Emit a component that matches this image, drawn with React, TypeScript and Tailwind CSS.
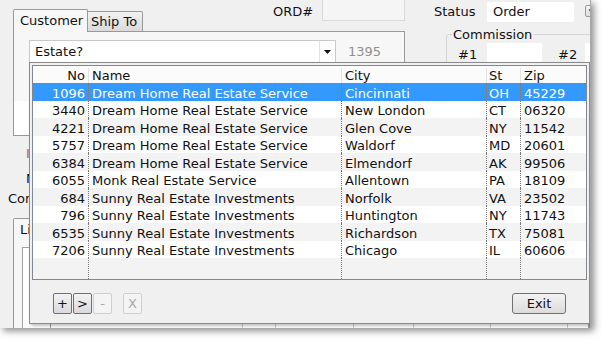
import React from "react";

const rows = [
  { no: "1096", name: "Dream Home Real Estate Service", city: "Cincinnati", st: "OH", zip: "45229" },
  { no: "3440", name: "Dream Home Real Estate Service", city: "New London", st: "CT", zip: "06320" },
  { no: "4221", name: "Dream Home Real Estate Service", city: "Glen Cove", st: "NY", zip: "11542" },
  { no: "5757", name: "Dream Home Real Estate Service", city: "Waldorf", st: "MD", zip: "20601" },
  { no: "6384", name: "Dream Home Real Estate Service", city: "Elmendorf", st: "AK", zip: "99506" },
  { no: "6055", name: "Monk Real Estate Service", city: "Allentown", st: "PA", zip: "18109" },
  { no: "684", name: "Sunny Real Estate Investments", city: "Norfolk", st: "VA", zip: "23502" },
  { no: "796", name: "Sunny Real Estate Investments", city: "Huntington", st: "NY", zip: "11743" },
  { no: "6535", name: "Sunny Real Estate Investments", city: "Richardson", st: "TX", zip: "75081" },
  { no: "7206", name: "Sunny Real Estate Investments", city: "Chicago", st: "IL", zip: "60606" },
];

function SmallButton({ label, disabled = false }: { label: string; disabled?: boolean }) {
  return (
    <button
      type="button"
      className={
        disabled
          ? "flex h-[21px] w-[19px] shrink-0 items-center justify-center rounded-[2px] border border-[#cfcfcf] bg-[#f4f4f4] text-[13px] leading-none text-[#a8a8a8]"
          : "flex h-[21px] w-[19px] shrink-0 items-center justify-center rounded-[2px] border border-[#707070] bg-gradient-to-b from-[#f3f3f3] to-[#dadada] text-[13px] leading-none text-[#111]"
      }
    >
      {label}
    </button>
  );
}

function PickList() {
  return (
    <div className="absolute left-[29px] top-[62px] z-20 flex h-[262px] w-[561px] flex-col border border-[#8b8b8b] bg-[#f0f0f0] p-[2px] shadow-[2px_2px_3px_rgba(0,0,0,0.25)]">
      <div className="flex h-[215px] flex-col border border-[#828790] bg-white">
        <div className="flex h-[17px] shrink-0 bg-[#fbfbfb] pt-[2px]">
          <div className="flex w-[56px] shrink-0 items-center justify-end border-r border-[#e3e3e3] pr-[3px]">No</div>
          <div className="flex w-[253px] shrink-0 items-center border-r border-[#e3e3e3] pl-[3px]">Name</div>
          <div className="flex w-[145px] shrink-0 items-center border-r border-[#e3e3e3] pl-[3px]">City</div>
          <div className="flex w-[34px] shrink-0 items-center border-r border-[#e3e3e3] pl-[2px]">St</div>
          <div className="flex flex-1 items-center pl-[3px]">Zip</div>
        </div>
        {rows.map((row, index) => {
          const selected = index === 0;
          const rowClass = selected
            ? "flex h-[17.5px] shrink-0 bg-[#3399ff] text-white"
            : index % 2 === 0
            ? "flex h-[17.5px] shrink-0 bg-[#f3f3f3]"
            : "flex h-[17.5px] shrink-0 bg-white";
          return (
            <div key={row.no} className={rowClass}>
              <div className="flex w-[56px] shrink-0 items-center justify-end border-r border-dotted border-[#7a7a7a] pr-[3px] pt-[3px]">{row.no}</div>
              <div className="flex w-[253px] shrink-0 items-center border-r border-dotted border-[#7a7a7a] pl-[3px] pt-[3px]">{row.name}</div>
              <div className="flex w-[145px] shrink-0 items-center border-r border-dotted border-[#7a7a7a] pl-[3px] pt-[3px]">{row.city}</div>
              <div className="flex w-[34px] shrink-0 items-center border-r border-dotted border-[#7a7a7a] pl-[2px] pt-[3px]">{row.st}</div>
              <div className="flex flex-1 items-center pl-[3px] pt-[3px]">{row.zip}</div>
            </div>
          );
        })}
        <div className="flex flex-1 bg-[#f3f3f3]">
          <div className="w-[56px] shrink-0 border-r border-dotted border-[#7a7a7a]" />
          <div className="w-[253px] shrink-0 border-r border-dotted border-[#7a7a7a]" />
          <div className="w-[145px] shrink-0 border-r border-dotted border-[#7a7a7a]" />
          <div className="w-[34px] shrink-0 border-r border-dotted border-[#7a7a7a]" />
          <div className="flex-1" />
        </div>
      </div>
      <div className="flex flex-1 items-start pt-[13px]">
        <div className="ml-[21px] flex shrink-0 gap-px">
          <SmallButton label="+" />
          <SmallButton label=">" />
          <SmallButton label="-" disabled />
        </div>
        <div className="ml-[11px] shrink-0">
          <SmallButton label="X" disabled />
        </div>
        <button
          type="button"
          className="ml-auto mr-[21px] flex h-[21px] w-[54px] shrink-0 items-center justify-center rounded-[3px] border border-[#707070] bg-gradient-to-b from-[#f3f3f3] to-[#dcdcdc] text-[13px] leading-none text-[#111]"
        >
          Exit
        </button>
      </div>
    </div>
  );
}

export default function App() {
  return (
    <div className="h-[339px] w-[603px] overflow-hidden bg-white font-['DejaVu_Sans',sans-serif] text-[13px] text-[#111]">
      <div className="relative h-[328px] w-[591px] overflow-hidden border-r border-[#a8a8a8] bg-[#f0f0f0] shadow-[3px_3px_7px_rgba(0,0,0,0.45)]">
        {/* header strip: tabs, order number, status */}
        <div className="flex h-[31px] items-start">
          <div className="ml-[13px] flex shrink-0 items-start">
            <div className="relative z-10 mt-[9px] h-[23px] w-[75px] shrink-0 rounded-t-[2px] border border-b-0 border-[#999] bg-[#f7f7f7] pl-[6px] leading-[21px]">
              Customer
            </div>
            <div className="mt-[11px] h-[20px] w-[55px] shrink-0 rounded-tr-[2px] border-r border-t border-[#999] bg-gradient-to-b from-[#f2f2f2] to-[#dadada] pl-[3px] leading-[19px]">
              Ship To
            </div>
          </div>
          <div className="ml-[130px] mt-[2px] w-[49px] shrink-0 leading-[20px]">ORD#</div>
          <div className="-mt-px h-[22px] w-[83px] shrink-0 border border-[#dadada] bg-[#f5f5f5]" />
          <div className="ml-[29px] mt-[2px] w-[53px] shrink-0 leading-[20px]">Status</div>
          <div className="mt-[2px] h-[20px] w-[87px] shrink-0 bg-white pl-[6px] leading-[20px]">Order</div>
          <div className="ml-[11px] mt-[5px] flex h-[12px] w-[14px] shrink-0 items-center justify-center rounded-[2px] border border-[#9a9a9a] bg-gradient-to-b from-[#f6f6f6] to-[#dedede]">
            <svg width="8" height="6" viewBox="0 0 8 6" fill="none" stroke="#3b5998" strokeWidth="1.3">
              <path d="M1 1.5 4 4.5 7 1.5" />
            </svg>
          </div>
        </div>

        {/* customer panel and commission group */}
        <div className="flex h-[105px] items-start">
          <div className="ml-[13px] flex h-[105px] w-[392px] shrink-0 flex-col border border-[#999] bg-[#f7f7f7]">
            <div className="ml-[15px] mt-[8px] flex items-center">
              <div className="flex h-[23px] w-[307px] shrink-0 border border-[#c9c9c9] bg-white">
                <div className="flex flex-1 items-center pl-[5px]">Estate?</div>
                <div className="flex w-[16px] items-center justify-center border-l border-[#e2e2e2]">
                  <svg width="7" height="4" viewBox="0 0 7 4">
                    <path d="M0 0h7L3.5 4z" fill="#111" />
                  </svg>
                </div>
              </div>
              <div className="ml-[12px] shrink-0 text-[#8f8f8f]">1395</div>
            </div>
            <div className="mt-auto h-[34px] w-[40px] bg-white" />
          </div>
          <div className="relative ml-[41px] mt-[3px] flex h-[60px] w-[160px] shrink-0 items-start rounded-[3px] border border-[#d5d5d5] pl-[11px] pt-[8px]">
            <div className="absolute -top-[9px] left-[5px] bg-[#f0f0f0] px-px leading-[17px]">Commission</div>
            <div className="mt-[2px] w-[29px] shrink-0 leading-[20px]">#1</div>
            <div className="h-[20px] w-[55px] shrink-0 bg-white" />
            <div className="ml-[16px] mt-[2px] w-[27px] shrink-0 leading-[20px]">#2</div>
            <div className="h-[20px] w-[40px] shrink-0 bg-white" />
          </div>
        </div>

        {/* what shows of the labels beside the pick list */}
        <div className="flex flex-col whitespace-nowrap leading-[18px]">
          <div className="ml-[26px] mt-[9px] text-[#b06a28]">I</div>
          <div className="ml-[26px] mt-[7px]">N</div>
          <div className="ml-[8px] mt-[2px]">Con</div>
        </div>

        {/* line items tab */}
        <div className="ml-[13px] mt-[10px] flex">
          <div className="relative z-10 h-[23px] w-[80px] shrink-0 rounded-t-[2px] border border-b-0 border-[#999] bg-[#f7f7f7] pl-[6px] leading-[21px]">
            Li
          </div>
        </div>
        <div className="-mt-px ml-[13px] h-[100px] border border-[#999] bg-[#f7f7f7] pl-[8px] pt-[6px]">
          <div className="flex h-[100px] border border-[#a0a0a0] bg-white">
            <div className="w-[28px] shrink-0 border-r border-[#a0a0a0]" />
            <div className="w-[192px] shrink-0 border-r border-[#c8c8c8]" />
            <div className="w-[33px] shrink-0 border-r border-[#c8c8c8]" />
            <div className="w-[78px] shrink-0 border-r border-[#c8c8c8]" />
            <div className="w-[60px] shrink-0 border-r border-[#c8c8c8]" />
            <div className="w-[77px] shrink-0 border-r border-[#c8c8c8]" />
            <div className="w-[77px] shrink-0 border-r border-[#c8c8c8]" />
            <div className="flex-1" />
          </div>
        </div>

        <PickList />
      </div>
    </div>
  );
}
